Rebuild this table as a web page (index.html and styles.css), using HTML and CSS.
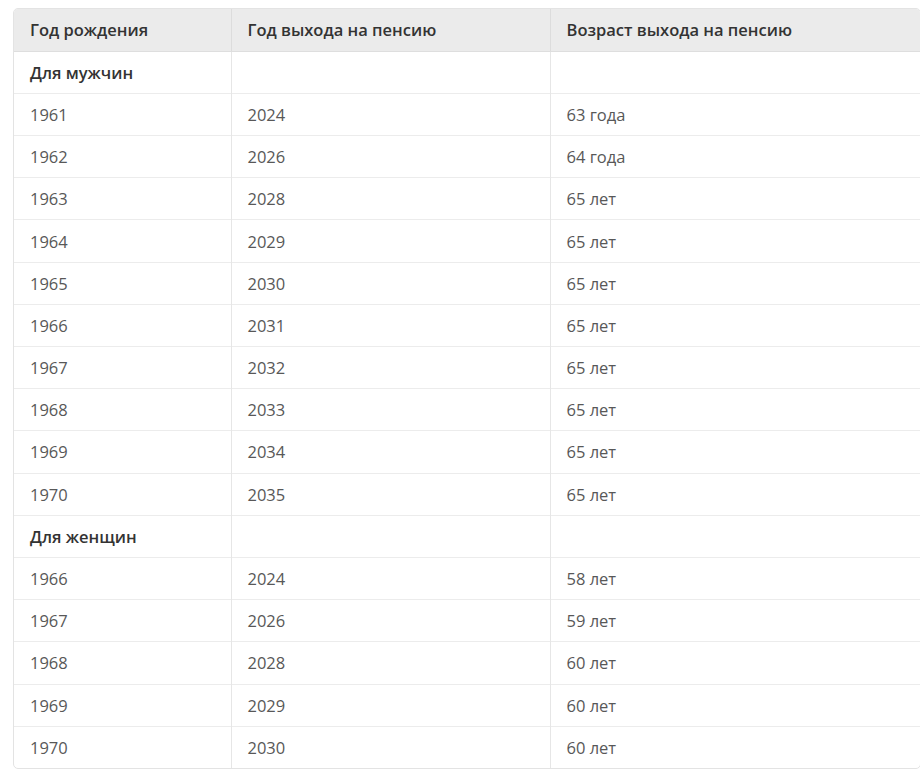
FILE: index.html
```html
<!DOCTYPE html>
<html lang="ru">
<head>
<meta charset="utf-8">
<link rel="stylesheet" href="styles.css">
</head>
<body>
<div class="wrap">
<table class="pens">
<thead>
<tr><th>Год рождения</th><th>Год выхода на пенсию</th><th>Возраст выхода на пенсию</th></tr>
</thead>
<tbody>
<tr class="grp"><td>Для мужчин</td><td></td><td></td></tr>
<tr><td>1961</td><td>2024</td><td>63 года</td></tr>
<tr><td>1962</td><td>2026</td><td>64 года</td></tr>
<tr><td>1963</td><td>2028</td><td>65 лет</td></tr>
<tr><td>1964</td><td>2029</td><td>65 лет</td></tr>
<tr><td>1965</td><td>2030</td><td>65 лет</td></tr>
<tr><td>1966</td><td>2031</td><td>65 лет</td></tr>
<tr><td>1967</td><td>2032</td><td>65 лет</td></tr>
<tr><td>1968</td><td>2033</td><td>65 лет</td></tr>
<tr><td>1969</td><td>2034</td><td>65 лет</td></tr>
<tr><td>1970</td><td>2035</td><td>65 лет</td></tr>
<tr class="grp"><td>Для женщин</td><td></td><td></td></tr>
<tr><td>1966</td><td>2024</td><td>58 лет</td></tr>
<tr><td>1967</td><td>2026</td><td>59 лет</td></tr>
<tr><td>1968</td><td>2028</td><td>60 лет</td></tr>
<tr><td>1969</td><td>2029</td><td>60 лет</td></tr>
<tr><td>1970</td><td>2030</td><td>60 лет</td></tr>
</tbody>
</table>
</div>
</body>
</html>
```
FILE: styles.css
```css
html, body {
  margin: 0;
  padding: 0;
  background: #ffffff;
}
body {
  padding: 8px 1px 0 13px;
  font-family: "Open Sans", "Noto Sans", sans-serif;
}
.wrap {
  width: 906px;
  border: 1px solid #e3e3e3;
  border-radius: 5px;
  overflow: hidden;
}
.pens {
  width: 100%;
  border-collapse: collapse;
  table-layout: fixed;
  font-size: 16.5px;
  color: #585858;
}
.pens th:nth-child(1), .pens td:nth-child(1) { width: 217px; }
.pens th:nth-child(2), .pens td:nth-child(2) { width: 319px; }
.pens th, .pens td {
  height: 42.2px;
  padding: 0 16px;
  text-align: left;
  border-left: 1px solid #e6e6e6;
  border-top: 1px solid #ececec;
  box-sizing: border-box;
  white-space: nowrap;
}
.pens th:first-child, .pens td:first-child { border-left: none; }
.pens thead th {
  background: #ebebeb;
  color: #333;
  font-weight: 600;
  border-top: none;
  border-bottom: 1px solid #dedede;
  border-left-color: #dcdcdc;
}
.pens .grp td {
  font-weight: 600;
  color: #333;
}
```
